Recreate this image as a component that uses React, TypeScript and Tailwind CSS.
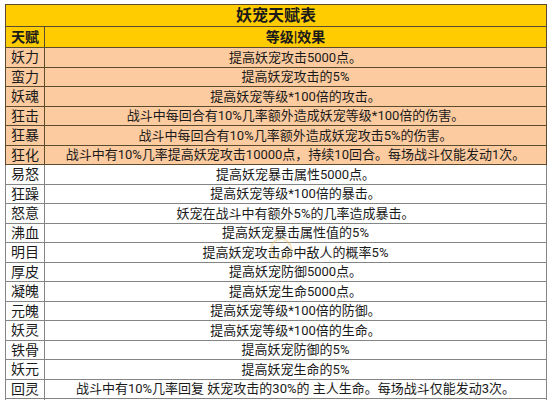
import React from 'react';

interface Talent {
  name: string;
  effect: string;
  hot?: boolean;
}

const talents: Talent[] = [
  { name: '妖力', effect: '提高妖宠攻击5000点。', hot: true },
  { name: '蛮力', effect: '提高妖宠攻击的5%', hot: true },
  { name: '妖魂', effect: '提高妖宠等级*100倍的攻击。', hot: true },
  { name: '狂击', effect: '战斗中每回合有10%几率额外造成妖宠等级*100倍的伤害。', hot: true },
  { name: '狂暴', effect: '战斗中每回合有10%几率额外造成妖宠攻击5%的伤害。', hot: true },
  { name: '狂化', effect: '战斗中有10%几率提高妖宠攻击10000点，持续10回合。每场战斗仅能发动1次。', hot: true },
  { name: '易怒', effect: '提高妖宠暴击属性5000点。' },
  { name: '狂躁', effect: '提高妖宠等级*100倍的暴击。' },
  { name: '怒意', effect: '妖宠在战斗中有额外5%的几率造成暴击。' },
  { name: '沸血', effect: '提高妖宠暴击属性值的5%' },
  { name: '明目', effect: '提高妖宠攻击命中敌人的概率5%' },
  { name: '厚皮', effect: '提高妖宠防御5000点。' },
  { name: '凝魄', effect: '提高妖宠生命5000点。' },
  { name: '元魄', effect: '提高妖宠等级*100倍的防御。' },
  { name: '妖灵', effect: '提高妖宠等级*100倍的生命。' },
  { name: '铁骨', effect: '提高妖宠防御的5%' },
  { name: '妖元', effect: '提高妖宠生命的5%' },
  { name: '回灵', effect: '战斗中有10%几率回复 妖宠攻击的30%的 主人生命。每场战斗仅能发动3次。' },
];

export default function App() {
  return (
    <div
      className="relative w-[552px] h-[400px] overflow-hidden bg-white pt-[4px] pl-[5px] text-[#1a1a1a]"
      style={{ fontFamily: "Roboto, 'Noto Sans CJK SC', sans-serif" }}
    >
      <table className="border-collapse w-[542px] table-fixed">
        <colgroup>
          <col className="w-[39px]" />
          <col />
        </colgroup>
        <tbody>
          <tr className="h-[22px] bg-[#ffcc00]">
            <td colSpan={2} className="border border-[#5c4a2e] p-0 text-center text-[16px] font-bold leading-none">
              妖宠天赋表
            </td>
          </tr>
          <tr className="h-[21px] bg-[#ffcc00]">
            <td className="border border-[#5c4a2e] p-0 text-center text-[14px] font-bold leading-none">天赋</td>
            <td className="border border-[#5c4a2e] p-0 text-center text-[14px] font-bold leading-none">等级|效果</td>
          </tr>
          {talents.map((t) => (
            <tr key={t.name} className={`h-[19.5px] ${t.hot ? 'bg-[#fccb9f]' : 'bg-white'}`}>
              <td className={`border p-0 text-center text-[14px] leading-none ${t.hot ? 'border-[#5c4a2e]' : 'border-[#858585]'}`}>
                {t.name}
              </td>
              <td className={`border p-0 text-center text-[13px] leading-none whitespace-nowrap ${t.hot ? 'border-[#5c4a2e]' : 'border-[#858585]'}`}>
                {t.effect}
              </td>
            </tr>
          ))}
          <tr className="h-[19.5px] bg-white">
            <td className="border border-[#858585] p-0"></td>
            <td className="border border-[#858585] p-0"></td>
          </tr>
        </tbody>
      </table>
      {/* faint watermark */}
      <div className="absolute left-[270px] top-[238px] w-[22px] h-[22px] rounded-full border-2 border-[#e8c66a] opacity-40 pointer-events-none" />
    </div>
  );
}
